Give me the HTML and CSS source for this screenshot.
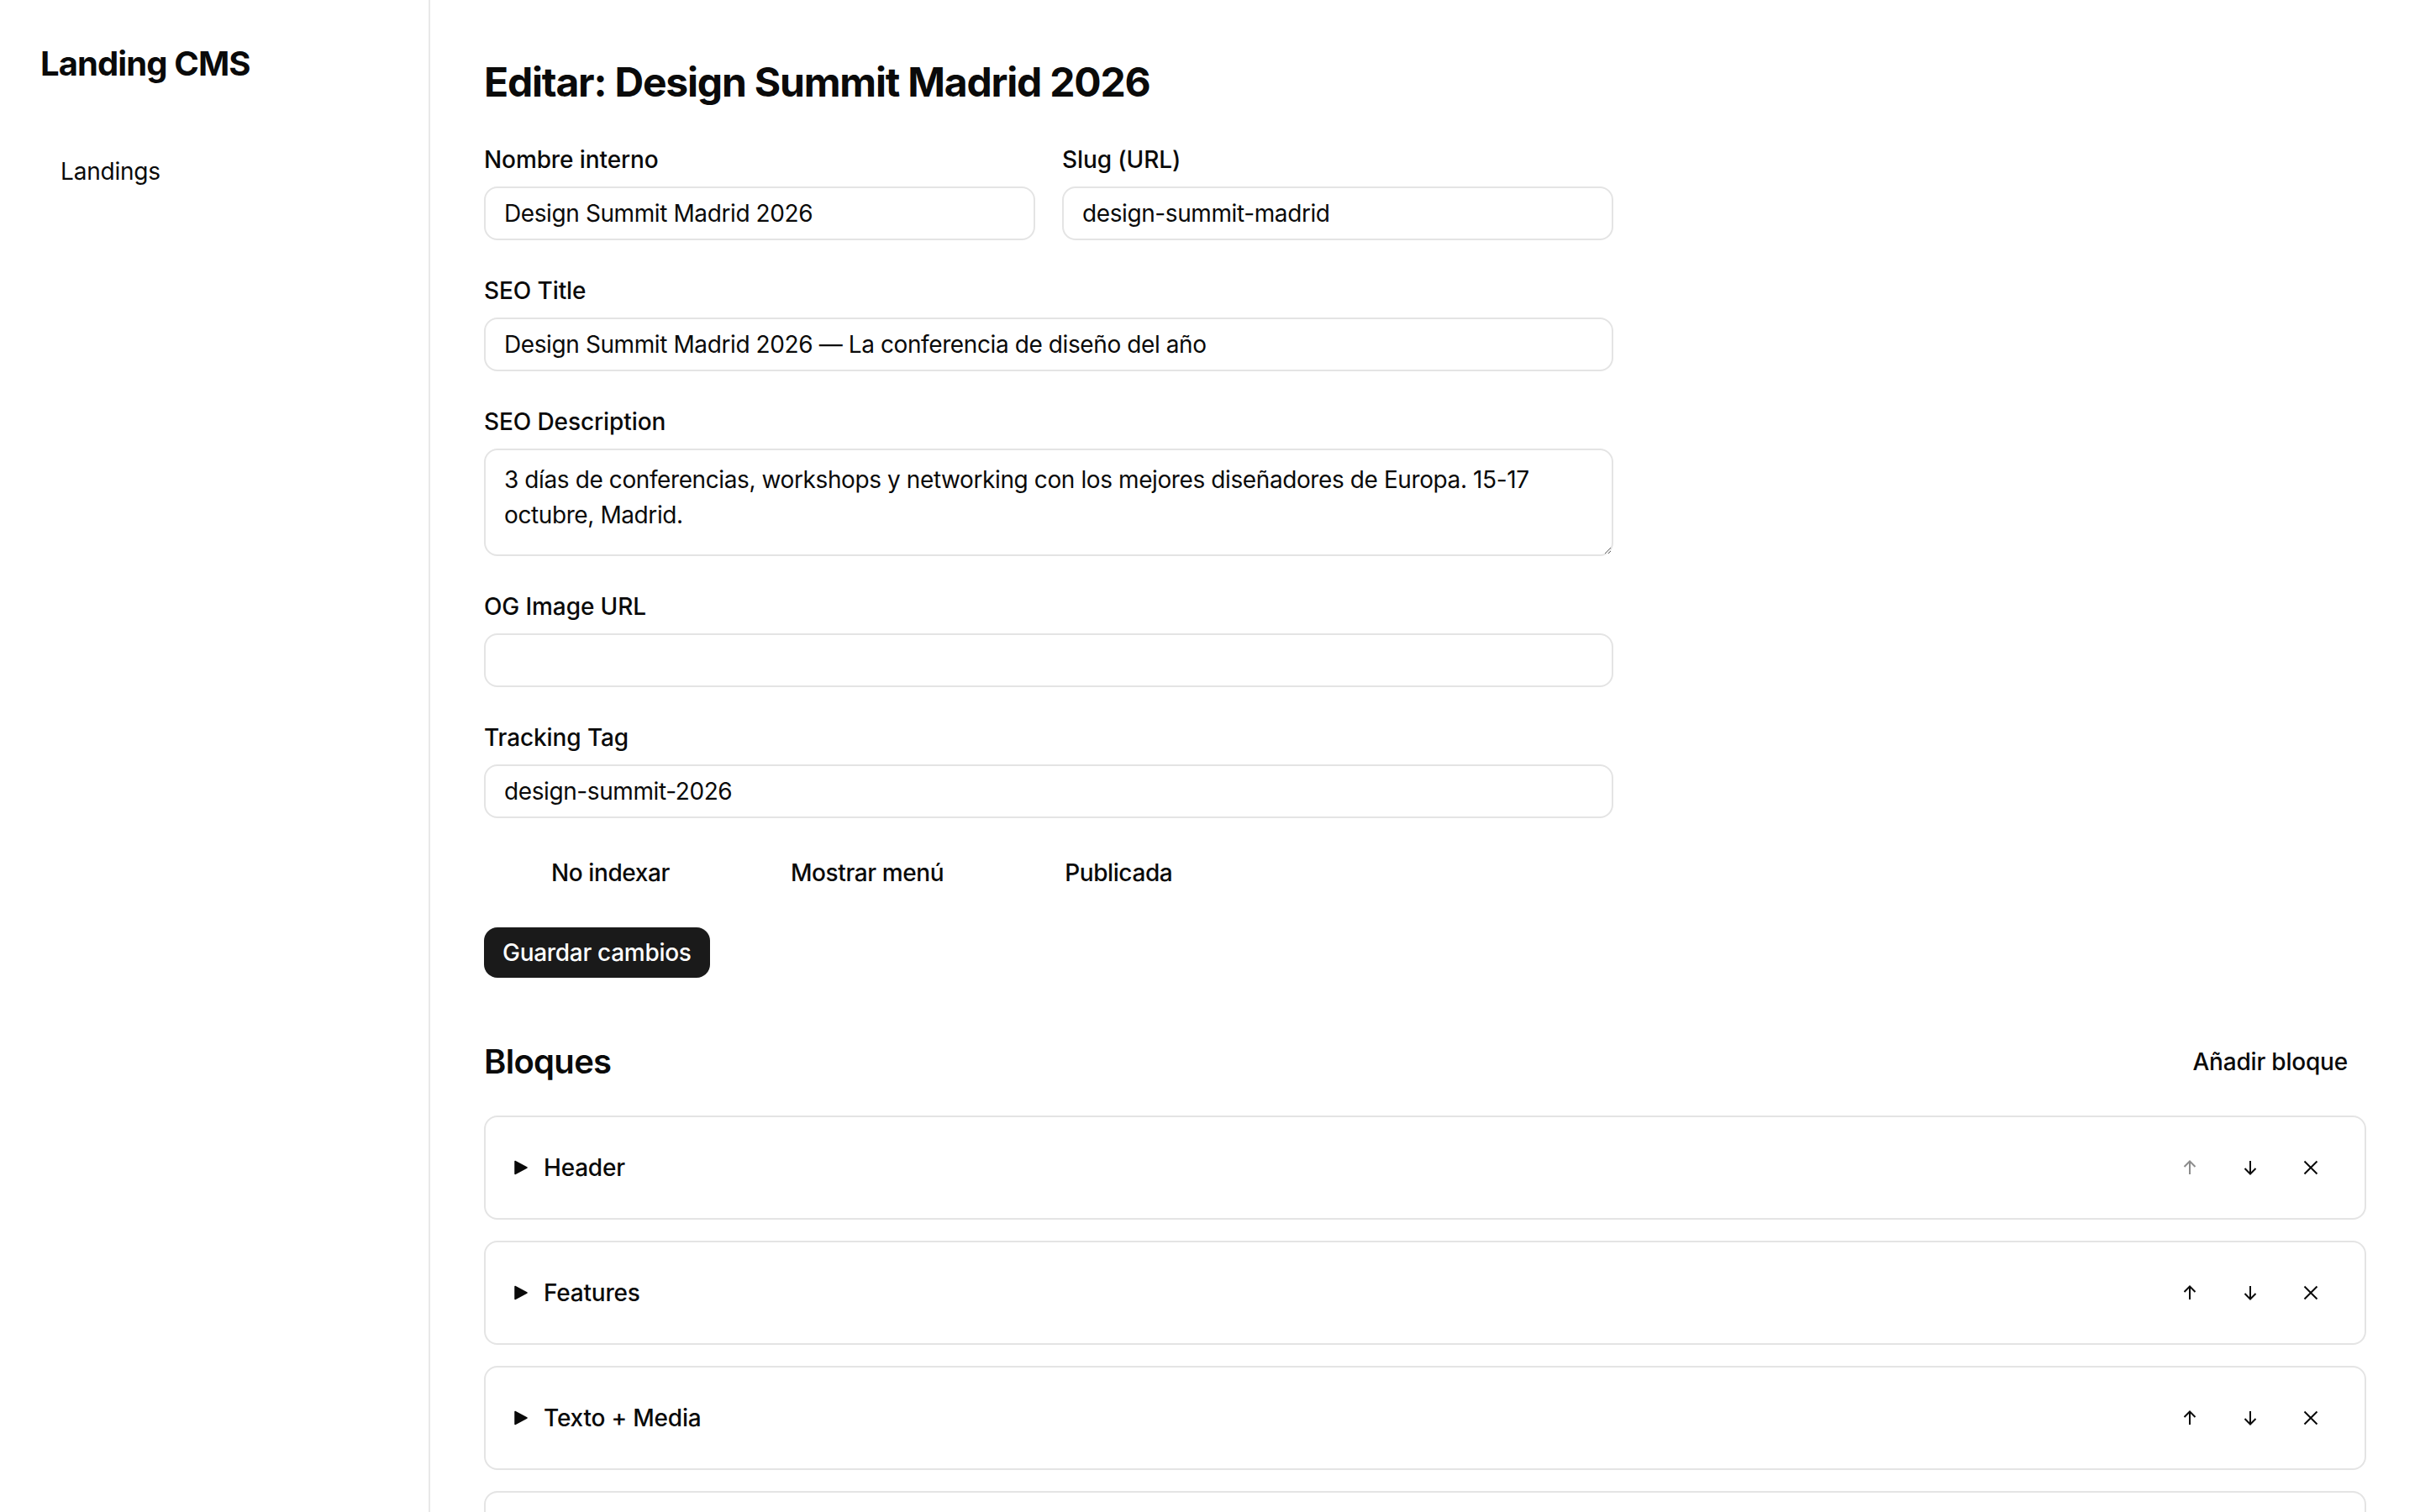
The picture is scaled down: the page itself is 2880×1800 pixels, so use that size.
FILE: index.html
```html
<!DOCTYPE html>
<html lang="es">
<head>
<meta charset="utf-8">
<title>Landing CMS</title>
<link rel="stylesheet" href="styles.css">
</head>
<body>
<div class="app">
  <aside class="sidebar">
    <div class="brand">Landing CMS</div>
    <nav class="nav">
      <a class="nav-link" href="#">Landings</a>
    </nav>
  </aside>
  <main class="main">
    <h1 class="page-title">Editar: Design Summit Madrid 2026</h1>
    <form class="form">
      <div class="row-2">
        <div class="field">
          <label class="label">Nombre interno</label>
          <input class="input" type="text" value="Design Summit Madrid 2026">
        </div>
        <div class="field">
          <label class="label">Slug (URL)</label>
          <input class="input" type="text" value="design-summit-madrid">
        </div>
      </div>
      <div class="field">
        <label class="label">SEO Title</label>
        <input class="input" type="text" value="Design Summit Madrid 2026 — La conferencia de diseño del año">
      </div>
      <div class="field">
        <label class="label">SEO Description</label>
        <textarea class="textarea">3 días de conferencias, workshops y networking con los mejores diseñadores de Europa. 15-17 octubre, Madrid.</textarea>
      </div>
      <div class="field">
        <label class="label">OG Image URL</label>
        <input class="input" type="text" value="">
      </div>
      <div class="field">
        <label class="label">Tracking Tag</label>
        <input class="input" type="text" value="design-summit-2026">
      </div>
      <div class="checks">
        <label class="check"><input class="check-box" type="checkbox"><span>No indexar</span></label>
        <label class="check"><input class="check-box" type="checkbox"><span>Mostrar menú</span></label>
        <label class="check"><input class="check-box" type="checkbox"><span>Publicada</span></label>
      </div>
      <div class="actions">
        <button class="btn-primary" type="button">Guardar cambios</button>
      </div>
    </form>

    <section class="blocks">
      <div class="blocks-head">
        <h2 class="blocks-title">Bloques</h2>
        <button class="btn-ghost" type="button">Añadir bloque</button>
      </div>
      <div class="block-list">
        <div class="block">
          <div class="block-row">
            <div class="block-name">
              <svg class="caret" viewBox="0 0 16 18" width="16" height="18"><path d="M1 1.5 L15 9 L1 16.5 Z" fill="currentColor" stroke="currentColor" stroke-width="1.5" stroke-linejoin="round"/></svg>
              <span>Header</span>
            </div>
            <div class="block-actions">
              <button class="icon-btn is-disabled" type="button"><svg viewBox="0 0 16 18" width="16" height="18"><path d="M8 17V1.5 M1.5 8 L8 1.5 L14.5 8" fill="none" stroke="currentColor" stroke-width="2"/></svg></button>
              <button class="icon-btn" type="button"><svg viewBox="0 0 16 18" width="16" height="18"><path d="M8 1V16.5 M1.5 10 L8 16.5 L14.5 10" fill="none" stroke="currentColor" stroke-width="2"/></svg></button>
              <button class="icon-btn" type="button"><svg viewBox="0 0 18 18" width="18" height="18"><path d="M1.5 1.5 L16.5 16.5 M16.5 1.5 L1.5 16.5" fill="none" stroke="currentColor" stroke-width="2"/></svg></button>
            </div>
          </div>
        </div>
        <div class="block">
          <div class="block-row">
            <div class="block-name">
              <svg class="caret" viewBox="0 0 16 18" width="16" height="18"><path d="M1 1.5 L15 9 L1 16.5 Z" fill="currentColor" stroke="currentColor" stroke-width="1.5" stroke-linejoin="round"/></svg>
              <span>Features</span>
            </div>
            <div class="block-actions">
              <button class="icon-btn" type="button"><svg viewBox="0 0 16 18" width="16" height="18"><path d="M8 17V1.5 M1.5 8 L8 1.5 L14.5 8" fill="none" stroke="currentColor" stroke-width="2"/></svg></button>
              <button class="icon-btn" type="button"><svg viewBox="0 0 16 18" width="16" height="18"><path d="M8 1V16.5 M1.5 10 L8 16.5 L14.5 10" fill="none" stroke="currentColor" stroke-width="2"/></svg></button>
              <button class="icon-btn" type="button"><svg viewBox="0 0 18 18" width="18" height="18"><path d="M1.5 1.5 L16.5 16.5 M16.5 1.5 L1.5 16.5" fill="none" stroke="currentColor" stroke-width="2"/></svg></button>
            </div>
          </div>
        </div>
        <div class="block">
          <div class="block-row">
            <div class="block-name">
              <svg class="caret" viewBox="0 0 16 18" width="16" height="18"><path d="M1 1.5 L15 9 L1 16.5 Z" fill="currentColor" stroke="currentColor" stroke-width="1.5" stroke-linejoin="round"/></svg>
              <span>Texto + Media</span>
            </div>
            <div class="block-actions">
              <button class="icon-btn" type="button"><svg viewBox="0 0 16 18" width="16" height="18"><path d="M8 17V1.5 M1.5 8 L8 1.5 L14.5 8" fill="none" stroke="currentColor" stroke-width="2"/></svg></button>
              <button class="icon-btn" type="button"><svg viewBox="0 0 16 18" width="16" height="18"><path d="M8 1V16.5 M1.5 10 L8 16.5 L14.5 10" fill="none" stroke="currentColor" stroke-width="2"/></svg></button>
              <button class="icon-btn" type="button"><svg viewBox="0 0 18 18" width="18" height="18"><path d="M1.5 1.5 L16.5 16.5 M16.5 1.5 L1.5 16.5" fill="none" stroke="currentColor" stroke-width="2"/></svg></button>
            </div>
          </div>
        </div>
        <div class="block block-partial" aria-hidden="true"></div>
      </div>
    </section>
  </main>
</div>
</body>
</html>
```
FILE: styles.css
```css
* { box-sizing: border-box; }

html, body {
  margin: 0;
  padding: 0;
  background: #ffffff;
}

body {
  font-family: Inter, "Noto Sans", "Liberation Sans", sans-serif;
  font-size: 28px;
  line-height: 40px;
  color: #0a0a0a;
}

.app {
  display: flex;
  min-height: 100vh;
}

.sidebar {
  width: 512px;
  flex: 0 0 512px;
  border-right: 2px solid #e8e8e8;
  padding: 52px 48px 48px 48px;
}

.brand {
  font-size: 40px;
  line-height: 48px;
  font-weight: 700;
  letter-spacing: -0.9px;
  margin-bottom: 84px;
}

.nav {
  display: flex;
  flex-direction: column;
}

.nav-link {
  display: block;
  padding: 0 24px;
  line-height: 40px;
  color: #0a0a0a;
  text-decoration: none;
  font-size: 28px;
  letter-spacing: -0.2px;
}

.main {
  flex: 1;
  padding: 66px 64px 0 64px;
  min-width: 0;
}

.page-title {
  margin: 0 0 40px 0;
  font-size: 48px;
  line-height: 64px;
  font-weight: 700;
  letter-spacing: -1.2px;
}

.form {
  max-width: 1344px;
  display: flex;
  flex-direction: column;
  gap: 40px;
}

.row-2 {
  display: grid;
  grid-template-columns: 1fr 1fr;
  gap: 32px;
}

.field {
  display: flex;
  flex-direction: column;
  gap: 12px;
}

.label {
  font-size: 28px;
  line-height: 40px;
  font-weight: 500;
  letter-spacing: -0.1px;
}

.input,
.textarea {
  display: block;
  width: 100%;
  font-family: inherit;
  font-size: 28px;
  letter-spacing: -0.4px;
  color: #0a0a0a;
  background: #fff;
  border: 2px solid #e4e4e4;
  border-radius: 16px;
  outline: none;
}

.input {
  height: 64px;
  padding: 0 22px;
  line-height: 40px;
}

.textarea {
  height: 128px;
  padding: 14px 22px;
  line-height: 42px;
  resize: vertical;
}

.checks {
  display: flex;
  align-items: center;
  gap: 64px;
  height: 50px;
}

.check {
  display: flex;
  align-items: center;
  gap: 24px;
  font-size: 28px;
  line-height: 40px;
  font-weight: 500;
  letter-spacing: -0.4px;
}

.check-box {
  appearance: none;
  -webkit-appearance: none;
  width: 56px;
  height: 32px;
  margin: 0;
  border: none;
  background: transparent;
}

.actions {
  display: flex;
}

.btn-primary {
  font-family: inherit;
  font-size: 28px;
  line-height: 40px;
  font-weight: 500;
  letter-spacing: -0.3px;
  color: #fff;
  background: #1a1a1a;
  border: none;
  border-radius: 16px;
  padding: 10px 22px;
}

.blocks {
  margin-top: 64px;
}

.blocks-head {
  display: flex;
  align-items: center;
  justify-content: space-between;
  height: 72px;
  margin-bottom: 28px;
}

.blocks-title {
  margin: 0;
  font-size: 40px;
  line-height: 56px;
  font-weight: 600;
  letter-spacing: -0.7px;
}

.btn-ghost {
  font-family: inherit;
  font-size: 28px;
  line-height: 40px;
  font-weight: 500;
  letter-spacing: -0.2px;
  color: #0a0a0a;
  background: transparent;
  border: none;
  padding: 16px 22px;
}

.block-list {
  display: flex;
  flex-direction: column;
  gap: 25px;
}

.block {
  border: 2px solid #e4e4e4;
  border-radius: 16px;
  padding: 32px;
}

.block-partial {
  height: 124px;
}

.block-row {
  display: flex;
  align-items: center;
  justify-content: space-between;
  height: 56px;
}

.block-name {
  display: flex;
  align-items: center;
  gap: 19px;
  font-size: 28px;
  font-weight: 500;
  letter-spacing: -0.2px;
  padding-left: 2px;
}

.caret {
  display: block;
  color: #0a0a0a;
}

.block-actions {
  display: flex;
  gap: 8px;
}

.icon-btn {
  width: 64px;
  height: 56px;
  display: flex;
  align-items: center;
  justify-content: center;
  background: transparent;
  border: none;
  padding: 0;
  color: #0a0a0a;
}

.icon-btn svg {
  display: block;
}

.icon-btn.is-disabled {
  color: #8c8c8c;
}
```
